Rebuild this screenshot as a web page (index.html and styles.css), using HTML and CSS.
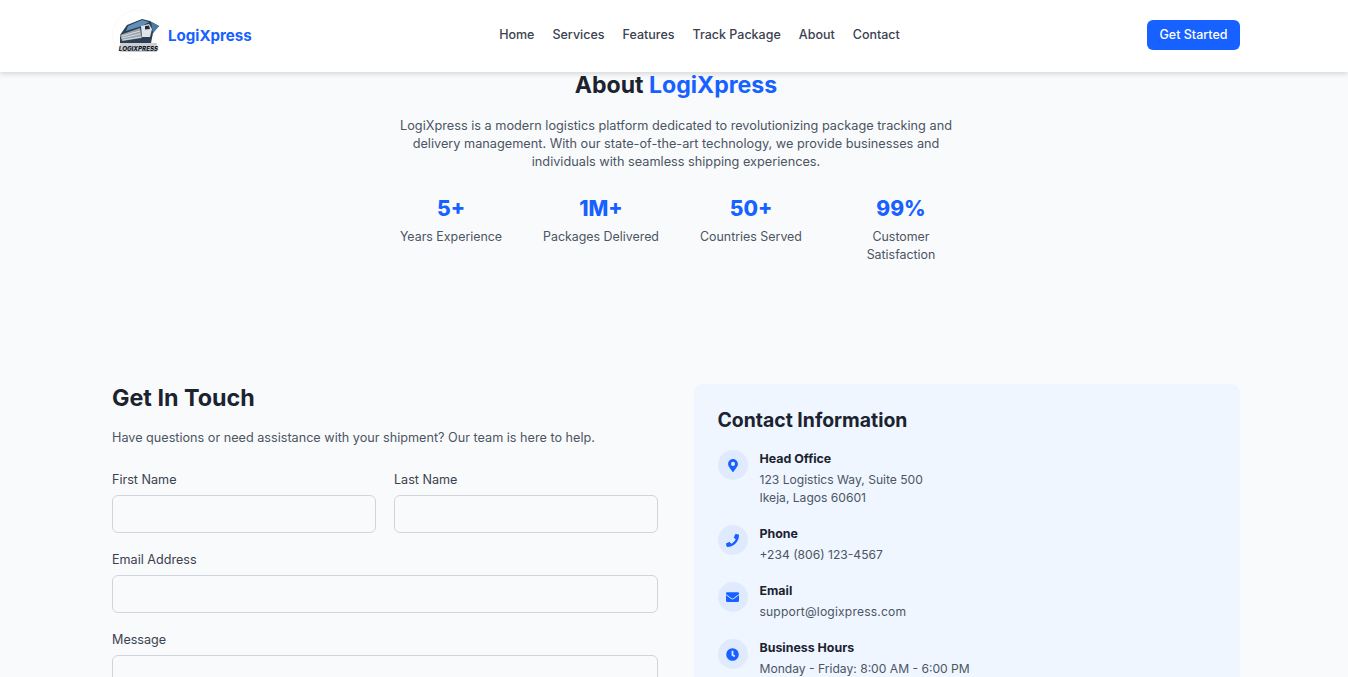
FILE: index.html
```html
<!DOCTYPE html>
<html lang="en">
<head>
<meta charset="utf-8">
<title>LogiXpress</title>
<link rel="stylesheet" href="styles.css">
</head>
<body>
<header class="nav">
  <div class="nav-inner">
    <a class="brand" href="#">
      <svg class="logo" viewBox="0 0 50 50" width="50" height="50" aria-hidden="true">
        <circle cx="25" cy="25" r="24.5" fill="#fff" stroke="#fbf9ee"/>
        <path d="M8 25 L15 15 L30 9 L38 11 L47 16 L41 23 L39 33 L8 33Z" fill="#2b3e52"/>
        <path d="M16 16 L30 10 L37 12 L30 16 L14 21Z" fill="#5f90b8"/>
        <path d="M8 25 L28 18 L30 28 L10 31Z" fill="#9aa4ad"/>
        <path d="M10 26 L28 21 M10 28 L28 24 M11 30 L29 27" stroke="#e6eaed" stroke-width=".8"/>
        <path d="M29 16 L37 14 L40 19 L38 27 L30 27Z" fill="#dfe4e8"/>
        <path d="M33 16 L37 15.500 L38 19 L33 19.500Z" fill="#1f2a36"/>
        <path d="M39 12 L47 16 L41 23Z" fill="#4a7da6"/>
        <rect x="8" y="33" width="37" height="9" rx="1" fill="#c9ced3"/>
        <text x="26.500" y="40.800" class="logo-text" text-anchor="middle">LOGIXPRESS</text>
      </svg>
      <span class="brand-name">LogiXpress</span>
    </a>
    <nav class="links">
      <a href="#">Home</a>
      <a href="#">Services</a>
      <a href="#">Features</a>
      <a href="#">Track Package</a>
      <a href="#">About</a>
      <a href="#">Contact</a>
    </nav>
    <a class="cta" href="#">Get Started</a>
  </div>
</header>

<main class="page">
  <section class="about">
    <h2 class="about-title">About <span class="blue">LogiXpress</span></h2>
    <p class="about-text">LogiXpress is a modern logistics platform dedicated to revolutionizing package tracking and<br>delivery management. With our state-of-the-art technology, we provide businesses and<br>individuals with seamless shipping experiences.</p>
    <div class="stats">
      <div class="stat"><div class="stat-num">5+</div><div class="stat-label">Years Experience</div></div>
      <div class="stat"><div class="stat-num">1M+</div><div class="stat-label">Packages Delivered</div></div>
      <div class="stat"><div class="stat-num">50+</div><div class="stat-label">Countries Served</div></div>
      <div class="stat"><div class="stat-num">99%</div><div class="stat-label">Customer<br>Satisfaction</div></div>
    </div>
  </section>

  <section class="contact">
    <div class="form-col">
      <h2 class="touch-title">Get In Touch</h2>
      <p class="touch-text">Have questions or need assistance with your shipment? Our team is here to help.</p>
      <form class="form">
        <div class="form-row">
          <label class="field"><span class="label">First Name</span><input class="input" type="text"></label>
          <label class="field"><span class="label">Last Name</span><input class="input" type="text"></label>
        </div>
        <label class="field"><span class="label">Email Address</span><input class="input" type="email"></label>
        <label class="field"><span class="label">Message</span><textarea class="input area"></textarea></label>
      </form>
    </div>
    <aside class="info">
      <h3 class="info-title">Contact Information</h3>
      <div class="info-item">
        <span class="icon"><svg viewBox="0 0 384 512" width="10" height="13"><path fill="#1661ff" d="M172 501C27 291 0 269 0 192 0 86 86 0 192 0s192 86 192 192c0 77-27 99-172 309a24 24 0 0 1-40 0zm20-229a80 80 0 1 0 0-160 80 80 0 0 0 0 160z"/></svg></span>
        <div><div class="item-title">Head Office</div><div class="item-text">123 Logistics Way, Suite 500<br>Ikeja, Lagos 60601</div></div>
      </div>
      <div class="info-item">
        <span class="icon"><svg viewBox="0 0 512 512" width="13" height="13"><path fill="#1661ff" d="M493 24 389 0c-11-3-23 3-27 14l-48 112c-4 10-1 21 7 28l61 50c-36 76-99 140-177 177l-50-61c-7-8-18-11-28-7L15 361c-11 5-17 16-14 28l24 104c3 11 12 19 23 19 257 0 464-208 464-464 0-11-8-21-19-24z"/></svg></span>
        <div><div class="item-title">Phone</div><div class="item-text">+234 (806) 123-4567</div></div>
      </div>
      <div class="info-item">
        <span class="icon"><svg viewBox="0 0 512 384" width="13" height="10"><path fill="#1661ff" d="M502 127c4-3 10 0 10 5v204c0 26-22 48-48 48H48c-26 0-48-22-48-48V132c0-5 6-8 10-5 22 17 52 39 154 113 21 15 57 48 92 48 35 0 72-33 92-48 102-74 132-96 154-113zM256 256c23 0 57-29 73-41 133-96 143-105 174-129 6-5 9-11 9-19V48c0-26-22-48-48-48H48C22 0 0 22 0 48v19c0 8 3 14 9 19 31 24 41 33 174 129 16 12 50 41 73 41z"/></svg></span>
        <div><div class="item-title">Email</div><div class="item-text item-email">support@logixpress.com</div></div>
      </div>
      <div class="info-item">
        <span class="icon"><svg viewBox="0 0 512 512" width="13" height="13"><path fill="#1661ff" d="M256 8a248 248 0 1 0 0 496 248 248 0 0 0 0-496zm57 350-88-64c-3-2-5-6-5-10V116c0-7 5-12 12-12h48c7 0 12 5 12 12v138l64 46c5 4 6 11 2 17l-28 39c-4 5-12 6-17 2z"/></svg></span>
        <div><div class="item-title">Business Hours</div><div class="item-text">Monday - Friday: 8:00 AM - 6:00 PM</div></div>
      </div>
    </aside>
  </section>
</main>
</body>
</html>
```

FILE: styles.css
```css
* { box-sizing: border-box; }
html, body { margin: 0; height: 677px; overflow: hidden; }
body { background: #f9fafc; font-family: Inter, "Open Sans", sans-serif; color: #1b2330; }
a { text-decoration: none; color: inherit; }
h2, h3, p { margin: 0; }
.blue { color: #1661ff; }

.nav { height: 72px; padding-left: 4px; background: #fff; box-shadow: 0 2px 5px rgba(0,0,0,.14); position: relative; z-index: 2; }
.nav-inner { width: 1128px; height: 70px; margin: 0 auto; display: flex; align-items: center; justify-content: space-between; }
.brand { display: flex; align-items: center; gap: 6px; width: 140px; }
.logo { flex: none; }
.logo-text { font: italic 800 6.2px Inter, sans-serif; fill: #10151c; }
.brand-name { font-size: 15.1px; font-weight: 700; color: #1661ff; white-space: nowrap; }
.links { display: flex; gap: 18px; font-size: 12.5px; font-weight: 500; color: #3a4250; margin-top: -1px; }
.cta { width: 93px; height: 30px; border-radius: 6px; background: #1661ff; color: #fff; font-size: 12.5px; font-weight: 500; display: flex; align-items: center; justify-content: center; padding-bottom: 1px; }

.page { padding-left: 4px; }
.about { text-align: center; height: 312px; }
.about-title { font-size: 23.1px; font-weight: 700; line-height: 27px; margin-bottom: 18px; }
.about-text { font-size: 12.72px; line-height: 18px; color: #4b5563; margin-bottom: 23px; }
.stats { display: grid; grid-template-columns: repeat(4, 150px); justify-content: center; }
.stat-num { font-size: 21px; font-weight: 800; line-height: 30px; color: #1661ff; margin-bottom: 4px; }
.stat-label { font-size: 12.4px; line-height: 18px; color: #4b5563; }

.contact { width: 1128px; margin: 0 auto; display: grid; grid-template-columns: 546px 546px; gap: 36px; }
.touch-title { font-size: 23.3px; font-weight: 700; line-height: 27px; margin-bottom: 18px; }
.touch-text { font-size: 12.65px; line-height: 18px; color: #4b5563; margin-bottom: 24px; }
.form { display: flex; flex-direction: column; gap: 18px; }
.form-row { display: grid; grid-template-columns: 1fr 1fr; gap: 18px; }
.field { display: block; }
.label { display: block; font-size: 12.6px; line-height: 18px; color: #3a4250; margin-bottom: 6px; }
.input { display: block; width: 100%; height: 38px; background: #f9fafc; border: 1px solid #d1d5db; border-radius: 6px; }
.area { height: 120px; resize: none; }

.info { background: #eff6ff; border-radius: 9px; padding: 24px 24px 24px 23.5px; height: 400px; }
.info-title { font-size: 19.4px; font-weight: 700; line-height: 25px; margin-bottom: 17px; }
.info-item { display: flex; gap: 12px; margin-bottom: 18px; }
.icon { flex: none; width: 30px; height: 30px; border-radius: 50%; background: #dfeaff; display: flex; align-items: center; justify-content: center; }
.item-title { font-size: 12.4px; font-weight: 700; line-height: 18px; margin-bottom: 3px; }
.item-text { font-size: 12.1px; line-height: 18px; color: #4b5563; }
.item-email { letter-spacing: .17px; }
```
